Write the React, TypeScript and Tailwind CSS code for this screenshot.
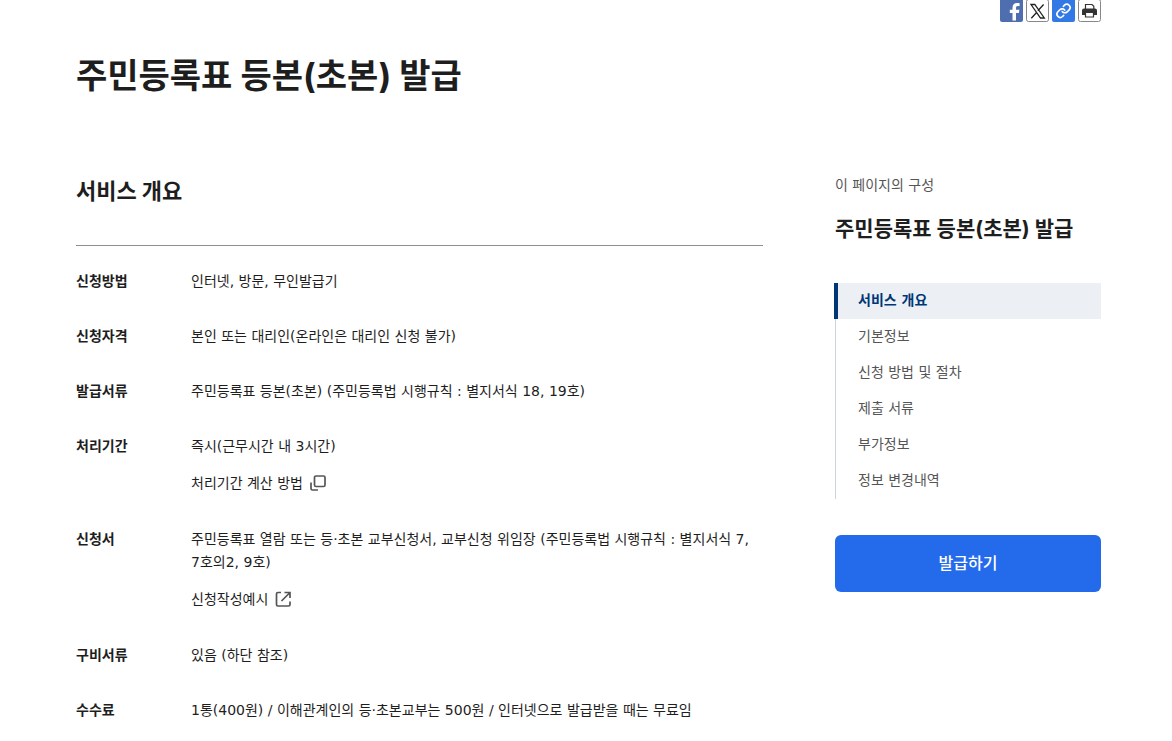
import type { ReactNode } from "react";

function FacebookIcon() {
  return (
    <svg viewBox="0 0 23 22" className="block h-[22px] w-[23px]" aria-hidden="true">
      <rect y="-2" width="23" height="24" rx="2" fill="#4f6eb0" />
      <path
        d="M12.500 20.500V13H9.800V9.800h2.700V7.700c0-3 1.700-4.700 4.500-4.700 1.200 0 2.100.1 2.600.2V6h-1.700c-1.500 0-1.900.8-1.900 1.900v1.900h3.400l-.5 3.200h-2.900v7.500z"
        fill="#fff"
      />
    </svg>
  );
}

function XIcon() {
  return (
    <svg viewBox="0 0 23 22" className="block h-[22px] w-[23px]" aria-hidden="true">
      <rect x=".5" y="-.5" width="22" height="22" rx="2" fill="#fff" stroke="#888" />
      <path
        d="M5 4.500h3.800l9.500 13.500h-3.800z M17.600 4.500l-5.700 6.200 M10.800 12.200L5.300 18.200"
        fill="none"
        stroke="#222"
        strokeWidth="1.300"
      />
    </svg>
  );
}

function LinkIcon() {
  return (
    <svg viewBox="0 0 23 22" className="block h-[22px] w-[23px]" aria-hidden="true">
      <rect y="-2" width="23" height="24" rx="2" fill="#3379e6" />
      <g transform="translate(3.600 2.900) scale(.66)" fill="none" stroke="#fff" strokeWidth="2.400" strokeLinecap="round" strokeLinejoin="round">
        <path d="M10 13a5 5 0 0 0 7.540.54l3-3a5 5 0 0 0-7.070-7.070l-1.720 1.710" />
        <path d="M14 11a5 5 0 0 0-7.540-.54l-3 3a5 5 0 0 0 7.070 7.070l1.710-1.710" />
      </g>
    </svg>
  );
}

function PrintIcon() {
  return (
    <svg viewBox="0 0 23 22" className="block h-[22px] w-[23px]" aria-hidden="true">
      <rect x=".5" y="-.5" width="22" height="22" rx="2" fill="#fff" stroke="#888" />
      <path d="M7.500 9V4.500h6.500l1.800 1.800V9" fill="#fff" stroke="#333" strokeWidth="1.200" />
      <path d="M6 8.500h11a2 2 0 0 1 2 2v4.500h-3v-2H7v2H4v-4.500a2 2 0 0 1 2-2z" fill="#333" />
      <path d="M7.500 12.500h8v4.500h-8z" fill="#fff" stroke="#333" strokeWidth="1.200" />
    </svg>
  );
}

function WindowIcon() {
  return (
    <svg viewBox="0 0 18 18" className="h-[18px] w-[18px]" fill="none" stroke="#555" strokeWidth="1.700" aria-hidden="true">
      <rect x="5.500" y="2" width="10.500" height="10.500" rx="1.500" />
      <path d="M2 8.500v6A1.500 1.500 0 0 0 3.500 16H9" />
    </svg>
  );
}

function ExternalIcon() {
  return (
    <svg viewBox="0 0 18 18" className="h-[18px] w-[18px]" fill="none" stroke="#555" strokeWidth="1.700" aria-hidden="true">
      <path d="M7 2.500H4A1.500 1.500 0 0 0 2.500 4v10.500A1.500 1.500 0 0 0 4 16h10.500a1.500 1.500 0 0 0 1.500-1.500V11.500" />
      <path d="M10.500 2.500H16V8M16 2.500L7.500 11" />
    </svg>
  );
}

const shares: { label: string; icon: ReactNode }[] = [
  { label: "페이스북 공유", icon: <FacebookIcon /> },
  { label: "X 공유", icon: <XIcon /> },
  { label: "링크 복사", icon: <LinkIcon /> },
  { label: "인쇄", icon: <PrintIcon /> },
];

const rows: { term: string; text: string; link?: string; icon?: ReactNode }[] = [
  { term: "신청방법", text: "인터넷, 방문, 무인발급기" },
  { term: "신청자격", text: "본인 또는 대리인(온라인은 대리인 신청 불가)" },
  { term: "발급서류", text: "주민등록표 등본(초본) (주민등록법 시행규칙 : 별지서식 18, 19호)" },
  { term: "처리기간", text: "즉시(근무시간 내 3시간)", link: "처리기간 계산 방법", icon: <WindowIcon /> },
  {
    term: "신청서",
    text: "주민등록표 열람 또는 등·초본 교부신청서, 교부신청 위임장 (주민등록법 시행규칙 : 별지서식 7, 7호의2, 9호)",
    link: "신청작성예시",
    icon: <ExternalIcon />,
  },
  { term: "구비서류", text: "있음 (하단 참조)" },
  { term: "수수료", text: "1통(400원) / 이해관계인의 등·초본교부는 500원 / 인터넷으로 발급받을 때는 무료임" },
];

const sections = ["기본정보", "신청 방법 및 절차", "제출 서류", "부가정보", "정보 변경내역"];

export default function App() {
  return (
    <div className="bg-white pr-[71px] pl-[76px] font-['DejaVu_Sans','Noto_Sans_CJK_KR',sans-serif] text-sm leading-[23px] break-keep text-[#1e1e1e]">
      <div className="flex justify-end gap-[3px]">
        {shares.map((s) => (
          <button key={s.label} type="button" aria-label={s.label}>
            {s.icon}
          </button>
        ))}
      </div>

      <h1 className="mt-[29px] font-[Inter,'Noto_Sans_CJK_KR',sans-serif] text-[34px] leading-[50px] font-bold">
        주민등록표 등본(초본) 발급
      </h1>

      <div className="mt-[73px] flex items-start gap-[72px]">
        <main className="min-w-0 flex-1">
          <h2 className="border-b border-[#8a8f94] pb-[41px] font-['Noto_Sans_CJK_KR',sans-serif] text-[22px] leading-[30px] font-bold">
            서비스 개요
          </h2>
          <dl className="flex flex-col gap-8 pt-6">
            {rows.map((r) => (
              <div key={r.term} className="flex">
                <dt className="w-[115px] shrink-0 font-bold">{r.term}</dt>
                <dd className="min-w-0 flex-1">
                  <p>{r.text}</p>
                  {r.link && (
                    <a href="#" className="mt-3 flex h-[26px] items-center gap-1.5">
                      {r.link}
                      {r.icon}
                    </a>
                  )}
                </dd>
              </div>
            ))}
          </dl>
        </main>

        <aside className="w-[266px] shrink-0">
          <p className="text-[#555]">이 페이지의 구성</p>
          <h2 className="mt-4 font-[Inter,'Noto_Sans_CJK_KR',sans-serif] text-[21px] leading-8 font-bold">
            주민등록표 등본(초본) 발급
          </h2>
          <nav className="mt-[38px] leading-[34px] text-[#555]">
            <a href="#" className="-ml-px block h-9 border-l-4 border-[#003675] bg-[#ecf0f5] pl-5 font-bold text-[#003675]">
              서비스 개요
            </a>
            {sections.map((s) => (
              <a key={s} href="#" className="block h-9 border-l border-[#cdd5e0] pl-[22px]">
                {s}
              </a>
            ))}
          </nav>
          <button type="button" className="mt-9 h-[57px] w-full rounded-md bg-[#246beb] text-base font-medium text-white">
            발급하기
          </button>
        </aside>
      </div>
    </div>
  );
}
